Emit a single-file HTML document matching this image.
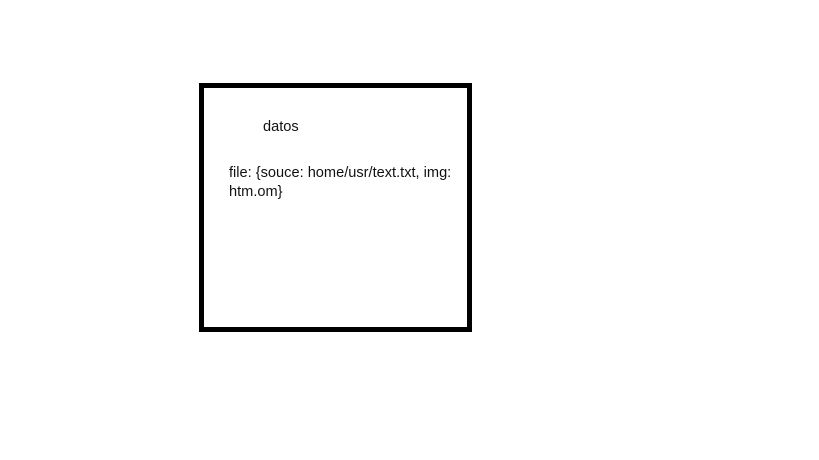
<!DOCTYPE html>
<html><head><style>
html,body{margin:0;padding:0;background:#fff;width:819px;height:460px;overflow:hidden}
.box{position:absolute;left:199px;top:83px;width:263px;height:239px;border:5px solid #000}
.t{position:absolute;font-family:"Liberation Sans",sans-serif;font-size:14.6px;color:#111;white-space:nowrap;line-height:19px}
</style></head><body>
<div class="box"></div>
<div class="t" style="left:263px;top:118px">datos</div>
<div class="t" style="left:229px;top:164px">file: {souce: home/usr/text.txt, img:<br>htm.om}</div>
</body></html>
